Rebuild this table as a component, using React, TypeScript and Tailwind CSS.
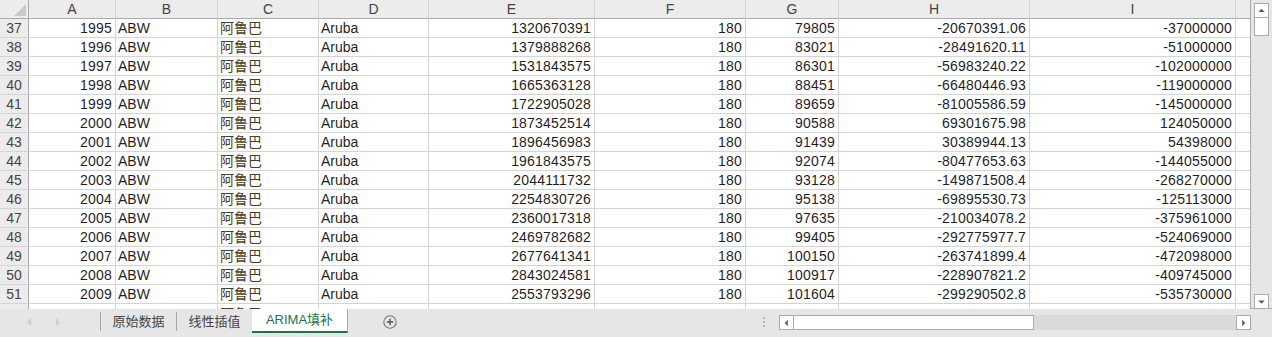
import React from 'react'

const FONT = '"Liberation Sans", "Noto Sans CJK SC", sans-serif'

// column widths incl. right border
const cols = [
  { key: 'A', w: 'w-[87px]' },
  { key: 'B', w: 'w-[102px]' },
  { key: 'C', w: 'w-[101px]' },
  { key: 'D', w: 'w-[110px]' },
  { key: 'E', w: 'w-[166px]' },
  { key: 'F', w: 'w-[151px]' },
  { key: 'G', w: 'w-[93px]' },
  { key: 'H', w: 'w-[191px]' },
  { key: 'I', w: 'w-[206px]' },
]

const rows: string[][] = [
  ['1995', '1320670391', '79805', '-20670391.06', '-37000000'],
  ['1996', '1379888268', '83021', '-28491620.11', '-51000000'],
  ['1997', '1531843575', '86301', '-56983240.22', '-102000000'],
  ['1998', '1665363128', '88451', '-66480446.93', '-119000000'],
  ['1999', '1722905028', '89659', '-81005586.59', '-145000000'],
  ['2000', '1873452514', '90588', '69301675.98', '124050000'],
  ['2001', '1896456983', '91439', '30389944.13', '54398000'],
  ['2002', '1961843575', '92074', '-80477653.63', '-144055000'],
  ['2003', '2044111732', '93128', '-149871508.4', '-268270000'],
  ['2004', '2254830726', '95138', '-69895530.73', '-125113000'],
  ['2005', '2360017318', '97635', '-210034078.2', '-375961000'],
  ['2006', '2469782682', '99405', '-292775977.7', '-524069000'],
  ['2007', '2677641341', '100150', '-263741899.4', '-472098000'],
  ['2008', '2843024581', '100917', '-228907821.2', '-409745000'],
  ['2009', '2553793296', '101604', '-299290502.8', '-535730000'],
]

const cell = 'h-[19px] shrink-0 border-r border-b border-[#d4d4d4] flex items-center overflow-hidden whitespace-nowrap'
const num = `${cell} justify-end pr-[3px] tracking-[0.2px]`
const txt = `${cell} pl-[2px]`

function DataRow({ n, r }: { n: number; r: string[] }) {
  return (
    <div className="flex">
      <div className="w-[29px] h-[19px] shrink-0 bg-[#ececec] border-r border-b border-r-[#ababab] border-b-[#d4d4d4] flex items-center justify-center text-[#444]">
        {n}
      </div>
      <div className={`${num} w-[87px]`}>{r[0]}</div>
      <div className={`${txt} w-[102px]`}>ABW</div>
      <div className={`${txt} w-[101px] text-[#4a3c22]`}>阿鲁巴</div>
      <div className={`${txt} w-[110px]`}>Aruba</div>
      <div className={`${num} w-[166px]`}>{r[1]}</div>
      <div className={`${num} w-[151px]`}>180</div>
      <div className={`${num} w-[93px]`}>{r[2]}</div>
      <div className={`${num} w-[191px]`}>{r[3]}</div>
      <div className={`${num} w-[206px]`}>{r[4]}</div>
      <div className="h-[19px] w-[15px] shrink-0 border-b border-[#d4d4d4]" />
    </div>
  )
}

// the row that is only partly visible above the sheet tabs
function PartialRow() {
  const c = 'h-[5px] shrink-0 border-r border-[#d4d4d4] overflow-hidden'
  return (
    <div className="flex h-[5px] overflow-hidden">
      <div className="w-[29px] h-[5px] shrink-0 bg-[#ececec] border-r border-[#ababab]" />
      <div className={`${c} w-[87px]`} />
      <div className={`${c} w-[102px]`} />
      <div className={`${c} w-[101px] pl-[2px] text-[#4a3c22] leading-[19px] pt-[1px]`}>阿鲁巴</div>
      <div className={`${c} w-[110px]`} />
      <div className={`${c} w-[166px]`} />
      <div className={`${c} w-[151px]`} />
      <div className={`${c} w-[93px]`} />
      <div className={`${c} w-[191px]`} />
      <div className={`${c} w-[206px]`} />
    </div>
  )
}

function ScrollBtn({ dir }: { dir: 'up' | 'down' | 'left' | 'right' }) {
  const pts = {
    up: '3.5,8.5 10.5,8.5 7,5',
    down: '3.5,6 10.5,6 7,9.5',
    left: '8.5,4 8.5,11 5,7.5',
    right: '5.5,4 5.5,11 9,7.5',
  }[dir]
  return (
    <div className="w-[15px] h-[15px] bg-white border border-[#ababab] flex items-center justify-center">
      <svg width="13" height="13" viewBox="0 0 14 14">
        <polygon points={pts} fill="#606060" />
      </svg>
    </div>
  )
}

export default function App() {
  return (
    <div className="w-[1272px] h-[337px] bg-[#e6e6e6] overflow-hidden text-[14px] text-[#1f1f1f]" style={{ fontFamily: FONT }}>
      <div className="flex h-[309px]">
        {/* Grid */}
        <div className="w-[1251px] h-[309px] bg-white overflow-hidden border-r border-[#ababab]">
          {/* column headers */}
          <div className="flex bg-[#ececec] text-[#444]">
            <div className="w-[29px] h-[19px] shrink-0 border-r border-b border-[#ababab] flex items-end justify-end pr-[2px] pb-[2px]">
              <svg width="12" height="12" viewBox="0 0 12 12">
                <polygon points="12,0 12,12 0,12" fill="#c9c9c9" />
              </svg>
            </div>
            {cols.map(c => (
              <div key={c.key} className={`${c.w} h-[19px] shrink-0 border-r border-b border-r-[#d4d4d4] border-b-[#ababab] flex items-center justify-center`}>
                {c.key}
              </div>
            ))}
            <div className="w-[15px] h-[19px] shrink-0 border-b border-[#ababab]" />
          </div>
          {rows.map((r, i) => (
            <DataRow key={i} n={37 + i} r={r} />
          ))}
          <PartialRow />
        </div>
        {/* Vertical scrollbar */}
        <div className="w-[21px] flex flex-col items-center pt-[3px]">
          <ScrollBtn dir="up" />
          <div className="w-[15px] h-[19px] -mt-px bg-white border border-[#ababab]" />
          <div className="flex-1" />
          <ScrollBtn dir="down" />
        </div>
      </div>

      {/* Sheet tab bar */}
      <div className="h-[28px] flex items-start border-t border-[#ababab] -mt-px">
        <div className="flex items-center h-[26px] w-[100px] pl-[25px] gap-[21px] shrink-0">
          <svg width="8" height="10" viewBox="0 0 8 10"><polygon points="6,1 6,9 2,5" fill="#cfcfcf" /></svg>
          <svg width="8" height="10" viewBox="0 0 8 10"><polygon points="2,1 2,9 6,5" fill="#cfcfcf" /></svg>
        </div>
        <div className="w-px h-[19px] mt-[3px] bg-[#a6a6a6] shrink-0" />
        <div className="h-[26px] w-[75px] flex items-center justify-center text-[13px] text-[#444] shrink-0 whitespace-nowrap">原始数据</div>
        <div className="w-px h-[19px] mt-[3px] bg-[#a6a6a6] shrink-0" />
        <div className="h-[26px] w-[75px] flex items-center justify-center text-[13px] text-[#444] shrink-0 whitespace-nowrap">线性插值</div>
        <div className="w-[96px] h-[24px] shrink-0 bg-white border-r border-[#ababab] border-b-2 border-b-[#217346] flex items-center justify-center text-[13px] text-[#217346] whitespace-nowrap">
          ARIMA填补
        </div>
        <div className="ml-[35px] mt-[6px] shrink-0">
          <svg width="14" height="14" viewBox="0 0 14 14">
            <circle cx="7" cy="7" r="6.2" fill="none" stroke="#7a7a7a" strokeWidth="1.1" />
            <path d="M7 3.8v6.4M3.8 7h6.4" stroke="#555" strokeWidth="1.4" />
          </svg>
        </div>
        {/* horizontal scrollbar */}
        <div className="ml-auto mr-[21px] mt-[6px] flex items-start">
          <div className="mt-[2px] mr-[14px] flex flex-col gap-[2px]">
            <div className="w-[2px] h-[2px] bg-[#b5b5b5]" />
            <div className="w-[2px] h-[2px] bg-[#b5b5b5]" />
            <div className="w-[2px] h-[2px] bg-[#b5b5b5]" />
          </div>
          <ScrollBtn dir="left" />
          <div className="w-[241px] h-[15px] -ml-px bg-white border border-[#ababab]" />
          <div className="w-[202px] h-[15px] bg-[#dadada]" />
          <ScrollBtn dir="right" />
        </div>
      </div>
    </div>
  )
}
